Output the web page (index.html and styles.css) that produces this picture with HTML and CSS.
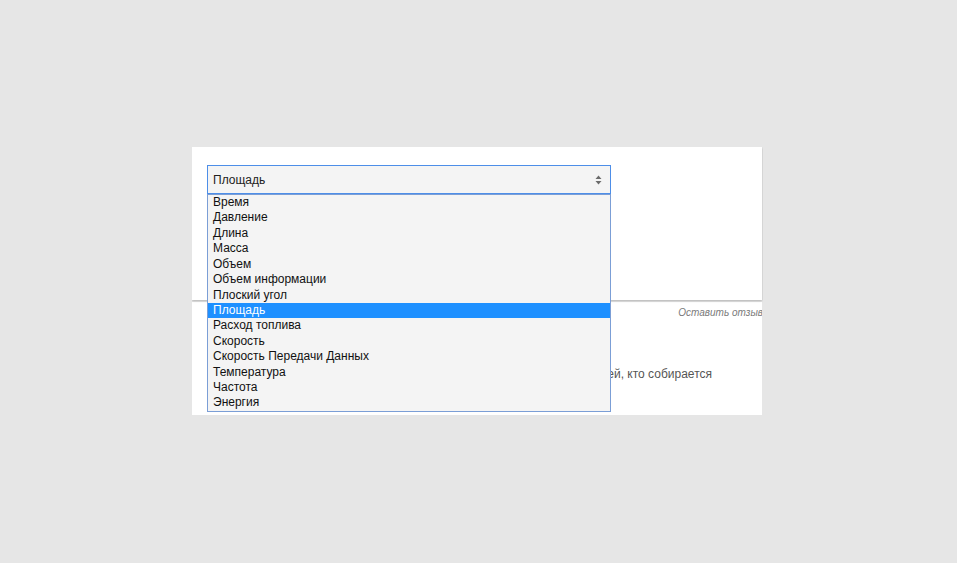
FILE: index.html
```html
<!DOCTYPE html>
<html lang="ru">
<head>
<meta charset="utf-8">
<title>Конвертер</title>
<link rel="stylesheet" href="styles.css">
</head>
<body>
<div class="widget">
  <div class="card">
    <div class="select-wrap">
      <div class="select">
        <span class="select-value">Площадь</span>
        <svg class="arrows" width="7" height="10" viewBox="0 0 7 10"><path d="M3.5 0.5 L6.5 4 L0.5 4 Z M0.5 6 L6.5 6 L3.5 9.5 Z" fill="#6b6b6b"/></svg>
      </div>
      <ul class="options">
        <li>Время</li>
        <li>Давление</li>
        <li>Длина</li>
        <li>Масса</li>
        <li>Объем</li>
        <li>Объем информации</li>
        <li>Плоский угол</li>
        <li class="selected">Площадь</li>
        <li>Расход топлива</li>
        <li>Скорость</li>
        <li>Скорость Передачи Данных</li>
        <li>Температура</li>
        <li>Частота</li>
        <li>Энергия</li>
      </ul>
    </div>
  </div>
  <div class="below">
    <div class="feedback">Оставить отзыв</div>
    <p class="desc">Этот инструмент будет полезен для всех людей, кто собирается</p>
  </div>
</div>
</body>
</html>
```

FILE: styles.css
```css
html, body {
  margin: 0;
  padding: 0;
  background: #e6e6e6;
  font-family: "Liberation Sans", Arial, sans-serif;
}

.widget {
  width: 571px;
  margin: 147px 0 0 192px;
  height: 268px;
  overflow: hidden;
  background: #e6e6e6;
}

.card {
  position: relative;
  z-index: 2;
  width: 570px;
  height: 153px;
  background: #fff;
  box-sizing: border-box;
  padding: 18px 0 0 15px;
  box-shadow: 0 1px 2px rgba(0, 0, 0, 0.22);
}

.select-wrap {
  position: relative;
  width: 404px;
}

.select {
  height: 29px;
  box-sizing: border-box;
  border: 1px solid #4d8ee8;
  background: #f4f4f4;
  display: flex;
  align-items: center;
  justify-content: space-between;
  padding: 0 8px 0 5px;
  font-size: 12px;
  color: #222;
}

.arrows {
  display: block;
  margin-top: 0;
}

.options {
  position: absolute;
  top: 29px;
  left: 0;
  width: 404px;
  box-sizing: border-box;
  margin: 0;
  padding: 0;
  list-style: none;
  background: #f4f4f4;
  border: 1px solid #7b9ed6;
  font-size: 12px;
  color: #111;
}

.options li {
  height: 15.43px;
  line-height: 15.43px;
  padding-left: 5px;
  white-space: nowrap;
}

.options li.selected {
  background: #1e90ff;
  color: #fff;
}

.below {
  width: 570px;
  height: 113px;
  margin-top: 2px;
  background: #fff;
  box-sizing: border-box;
  padding: 5px 50px 0 15px;
  position: relative;
  z-index: 1;
  overflow: hidden;
}

.feedback {
  text-align: right;
  font-size: 10px;
  font-style: italic;
  color: #7a7a7a;
  margin-right: -51px;
  line-height: 12px;
  white-space: nowrap;
}

.desc {
  margin: 47px 0 0 0;
  text-align: right;
  font-size: 12px;
  color: #555;
  line-height: 16px;
  white-space: nowrap;
}
```
